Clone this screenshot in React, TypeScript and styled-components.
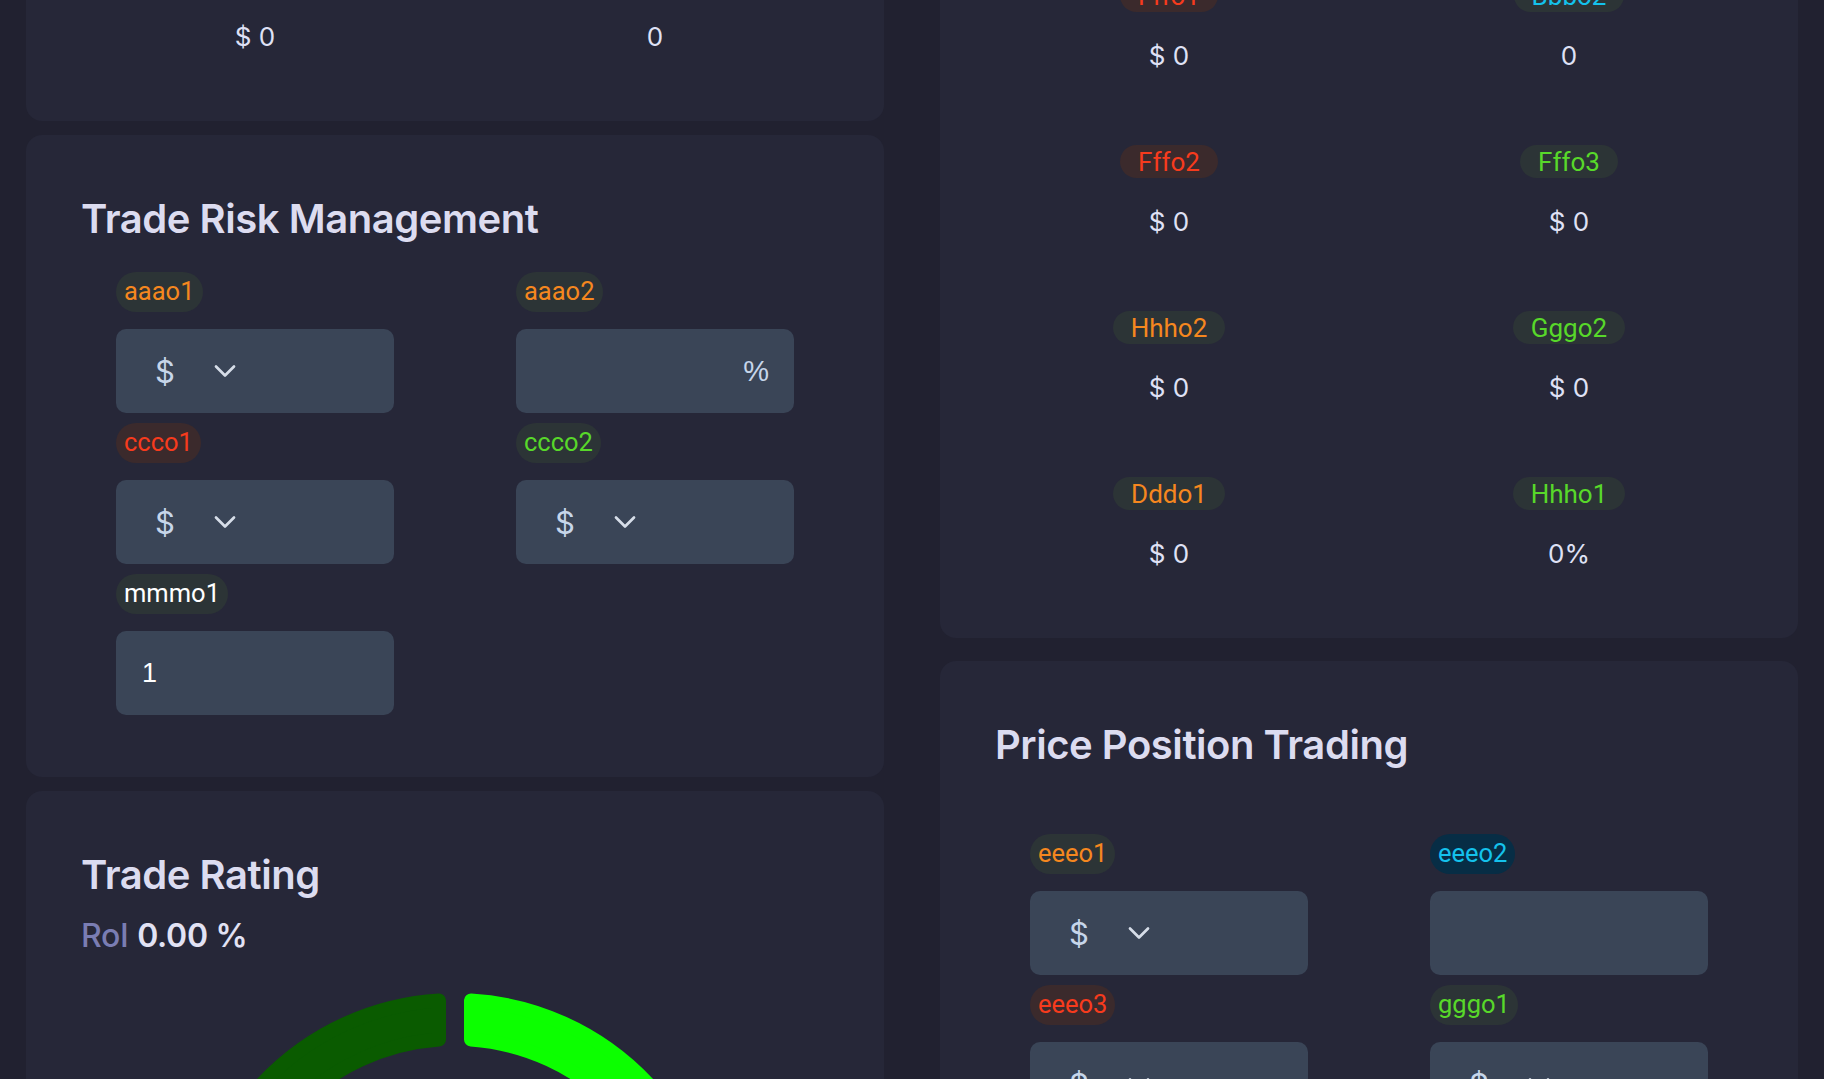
import React, { useLayoutEffect, useRef } from "react";
import styled, { createGlobalStyle } from "styled-components";
import { ChevronDown } from "lucide-react";

const GlobalStyle = createGlobalStyle`
  html, body {
    margin: 0;
    padding: 0;
    background: #212130;
    overflow: hidden;
  }
  *, *::before, *::after { box-sizing: border-box; }
`;

type Tone = "orange" | "red" | "green" | "cyan" | "info" | "white";

const tones: Record<Tone, { fg: string; bg: string }> = {
  orange: { fg: "#f5871f", bg: "#2c3436" },
  red: { fg: "#f73b1d", bg: "#3b2a2c" },
  green: { fg: "#58d82a", bg: "#2c3436" },
  cyan: { fg: "#14c2ec", bg: "#2c3436" },
  info: { fg: "#14c2ec", bg: "#072d45" },
  white: { fg: "#ffffff", bg: "#2c3436" },
};

const badgeSizes = {
  form: { height: 40, pad: 8, font: 25.5 },
  stat: { height: 33, pad: 18, font: 26 },
};

const SCROLL_OFFSET = 380;

const Viewport = styled.div`
  height: 100vh;
  overflow: hidden;
  background: #212130;
`;

const Page = styled.main`
  display: grid;
  grid-template-columns: minmax(0, 1fr) minmax(0, 1fr);
  column-gap: 56px;
  align-items: start;
  padding: 26px 26px 80px;
`;

const Column = styled.div<{ $gap: number }>`
  display: flex;
  flex-direction: column;
  gap: ${(p) => p.$gap}px;
  min-width: 0;
`;

const Card = styled.section<{ $padBottom: number }>`
  background: #262738;
  border-radius: 16px;
  padding: 60px 55px ${(p) => p.$padBottom}px;
`;

const CardTitle = styled.h2`
  margin: 0;
  font-family: Inter, "Noto Sans", sans-serif;
  font-weight: 600;
  font-size: 40px;
  line-height: 48px;
  letter-spacing: -0.45px;
  color: #dcdcf0;
`;

const CardSubtitle = styled.p`
  margin: 0;
  font-family: Inter, sans-serif;
  font-size: 14px;
  line-height: 19px;
  color: #7a7db3;
`;

const Badge = styled.span<{ $tone: Tone; $size: "form" | "stat" }>`
  display: inline-flex;
  align-items: center;
  height: ${(p) => badgeSizes[p.$size].height}px;
  padding: 0 ${(p) => badgeSizes[p.$size].pad}px;
  border-radius: 999px;
  font-family: Roboto, "Liberation Sans", Arial, sans-serif;
  font-size: ${(p) => badgeSizes[p.$size].font}px;
  line-height: 1;
  white-space: nowrap;
  color: ${(p) => tones[p.$tone].fg};
  background: ${(p) => tones[p.$tone].bg};
`;

/* ---------- stat cards ---------- */

const StatGrid = styled.div`
  display: grid;
  grid-template-columns: 1fr 1fr;
  row-gap: 73px;
  margin: 40px -26px 0;
`;

const StatItem = styled.div`
  display: flex;
  flex-direction: column;
  align-items: center;
  gap: 28px;
`;

const StatValue = styled.span`
  font-family: Inter, sans-serif;
  font-size: 26px;
  line-height: 32px;
  color: #dfe1f5;
`;

/* ---------- form cards ---------- */

const FormGrid = styled.div<{ $top: number }>`
  display: grid;
  grid-template-columns: 400px 278px;
  row-gap: 10px;
  margin: ${(p) => p.$top}px 0 0 35px;
`;

const Field = styled.div`
  display: flex;
  flex-direction: column;
  align-items: flex-start;
  gap: 17px;
`;

const InputShell = styled.label`
  display: flex;
  align-items: center;
  width: 278px;
  height: 84px;
  padding: 0 25px 0 26px;
  border-radius: 10px;
  background: #3a4557;
`;

const TextInput = styled.input`
  flex: 1;
  min-width: 0;
  padding: 0;
  border: none;
  outline: none;
  background: transparent;
  color: #ffffff;
  font-family: "Liberation Sans", Arial, sans-serif;
  font-size: 27px;
`;

const Suffix = styled.span`
  color: #c6d5ea;
  font-family: "Liberation Sans", Arial, sans-serif;
  font-size: 29px;
`;

const SelectTrigger = styled.button`
  display: flex;
  align-items: center;
  gap: 32px;
  width: 278px;
  height: 84px;
  padding: 0 0 0 39px;
  border: none;
  border-radius: 10px;
  background: #3a4557;
  color: #d6dde8;
  cursor: pointer;
`;

const Currency = styled.span`
  font-family: Inter, sans-serif;
  font-size: 31px;
  color: #c6d5ea;
`;

/* ---------- rating card ---------- */

const RoiLine = styled.div`
  margin-top: 17px;
  font-family: Inter, sans-serif;
  font-size: 32px;
  line-height: 40px;
  letter-spacing: -0.3px;
`;

const RoiLabel = styled.span`
  color: #7a7db3;
  font-weight: 500;
`;

const RoiValue = styled.span`
  color: #e2e2f4;
  font-weight: 600;
`;

const GaugeWrap = styled.div`
  display: flex;
  justify-content: center;
  margin-top: 23px;
`;

/* ---------- data ---------- */

type Stat = { label: string; tone: Tone; value: string };
type FieldDef = {
  label: string;
  tone: Tone;
  kind: "select" | "percent" | "number" | "text";
  value?: string;
};

const overviewStats: Stat[] = [
  { label: "Aaao3", tone: "orange", value: "$ 0" },
  { label: "Bbbo1", tone: "cyan", value: "0" },
  { label: "Kkko1", tone: "green", value: "$ 0" },
  { label: "Kkko2", tone: "cyan", value: "0" },
];

const resultStats: Stat[] = [
  { label: "Ccco3", tone: "orange", value: "$ 0" },
  { label: "Ccco4", tone: "green", value: "$ 0" },
  { label: "Fffo1", tone: "red", value: "$ 0" },
  { label: "Bbbo2", tone: "cyan", value: "0" },
  { label: "Fffo2", tone: "red", value: "$ 0" },
  { label: "Fffo3", tone: "green", value: "$ 0" },
  { label: "Hhho2", tone: "orange", value: "$ 0" },
  { label: "Gggo2", tone: "green", value: "$ 0" },
  { label: "Dddo1", tone: "orange", value: "$ 0" },
  { label: "Hhho1", tone: "green", value: "0%" },
];

const riskFields: FieldDef[] = [
  { label: "aaao1", tone: "orange", kind: "select" },
  { label: "aaao2", tone: "orange", kind: "percent" },
  { label: "ccco1", tone: "red", kind: "select" },
  { label: "ccco2", tone: "green", kind: "select" },
  { label: "mmmo1", tone: "white", kind: "number", value: "1" },
];

const priceFields: FieldDef[] = [
  { label: "eeeo1", tone: "orange", kind: "select" },
  { label: "eeeo2", tone: "info", kind: "text" },
  { label: "eeeo3", tone: "red", kind: "select" },
  { label: "gggo1", tone: "green", kind: "select" },
  { label: "iiio1", tone: "orange", kind: "select" },
  { label: "iiio2", tone: "cyan", kind: "text" },
];

/* ---------- components ---------- */

function StatBlock({ stats }: { stats: Stat[] }) {
  return (
    <StatGrid>
      {stats.map((s) => (
        <StatItem key={s.label}>
          <Badge $tone={s.tone} $size="stat">
            {s.label}
          </Badge>
          <StatValue>{s.value}</StatValue>
        </StatItem>
      ))}
    </StatGrid>
  );
}

function FieldControl({ field }: { field: FieldDef }) {
  if (field.kind === "select") {
    return (
      <SelectTrigger type="button">
        <Currency>$</Currency>
        <ChevronDown size={36} strokeWidth={1.8} />
      </SelectTrigger>
    );
  }
  return (
    <InputShell>
      <TextInput
        defaultValue={field.value ?? ""}
        inputMode={field.kind === "text" ? "text" : "decimal"}
      />
      {field.kind === "percent" && <Suffix>%</Suffix>}
    </InputShell>
  );
}

function FormBlock({ fields, top }: { fields: FieldDef[]; top: number }) {
  return (
    <FormGrid $top={top}>
      {fields.map((f) => (
        <Field key={f.label}>
          <Badge $tone={f.tone} $size="form">
            {f.label}
          </Badge>
          <FieldControl field={f} />
        </Field>
      ))}
    </FormGrid>
  );
}

function sectorPath(
  cx: number,
  cy: number,
  outer: number,
  inner: number,
  edge: number,
  side: "left" | "right"
) {
  const yo = cy - Math.sqrt(outer * outer - edge * edge);
  const yi = cy - Math.sqrt(inner * inner - edge * edge);
  if (side === "left") {
    return `M ${cx - outer} ${cy} A ${outer} ${outer} 0 0 1 ${cx - edge} ${yo} L ${cx - edge} ${yi} A ${inner} ${inner} 0 0 0 ${cx - inner} ${cy} Z`;
  }
  return `M ${cx + outer} ${cy} A ${outer} ${outer} 0 0 0 ${cx + edge} ${yo} L ${cx + edge} ${yi} A ${inner} ${inner} 0 0 1 ${cx + inner} ${cy} Z`;
}

function Gauge() {
  const cx = 280;
  const cy = 285;
  const round = 7;
  const outer = 271 - round;
  const inner = 218 + round;
  const edge = 9 + round;
  const segments = [
    { side: "left" as const, color: "#0a5b00" },
    { side: "right" as const, color: "#0cff00" },
  ];
  return (
    <svg width={560} height={300} viewBox="0 0 560 300">
      {segments.map((s) => (
        <path
          key={s.side}
          d={sectorPath(cx, cy, outer, inner, edge, s.side)}
          fill={s.color}
          stroke={s.color}
          strokeWidth={round * 2}
          strokeLinejoin="round"
        />
      ))}
    </svg>
  );
}

export default function App() {
  const viewportRef = useRef<HTMLDivElement>(null);

  useLayoutEffect(() => {
    if (viewportRef.current) viewportRef.current.scrollTop = SCROLL_OFFSET;
  }, []);

  return (
    <>
      <GlobalStyle />
      <Viewport ref={viewportRef}>
        <Page>
          <Column $gap={14}>
            <Card $padBottom={68}>
              <CardTitle>Trade Overview</CardTitle>
              <StatBlock stats={overviewStats} />
            </Card>
            <Card $padBottom={62}>
              <CardTitle>Trade Risk Management</CardTitle>
              <FormBlock fields={riskFields} top={29} />
            </Card>
            <Card $padBottom={60}>
              <CardTitle>Trade Rating</CardTitle>
              <RoiLine>
                <RoiLabel>RoI</RoiLabel> <RoiValue>0.00 %</RoiValue>
              </RoiLine>
              <GaugeWrap>
                <Gauge />
              </GaugeWrap>
            </Card>
          </Column>
          <Column $gap={23}>
            <Card $padBottom={68}>
              <CardTitle>Trade Results</CardTitle>
              <CardSubtitle>Realized and projected values</CardSubtitle>
              <StatBlock stats={resultStats} />
            </Card>
            <Card $padBottom={62}>
              <CardTitle>Price Position Trading</CardTitle>
              <FormBlock fields={priceFields} top={65} />
            </Card>
          </Column>
        </Page>
      </Viewport>
    </>
  );
}
